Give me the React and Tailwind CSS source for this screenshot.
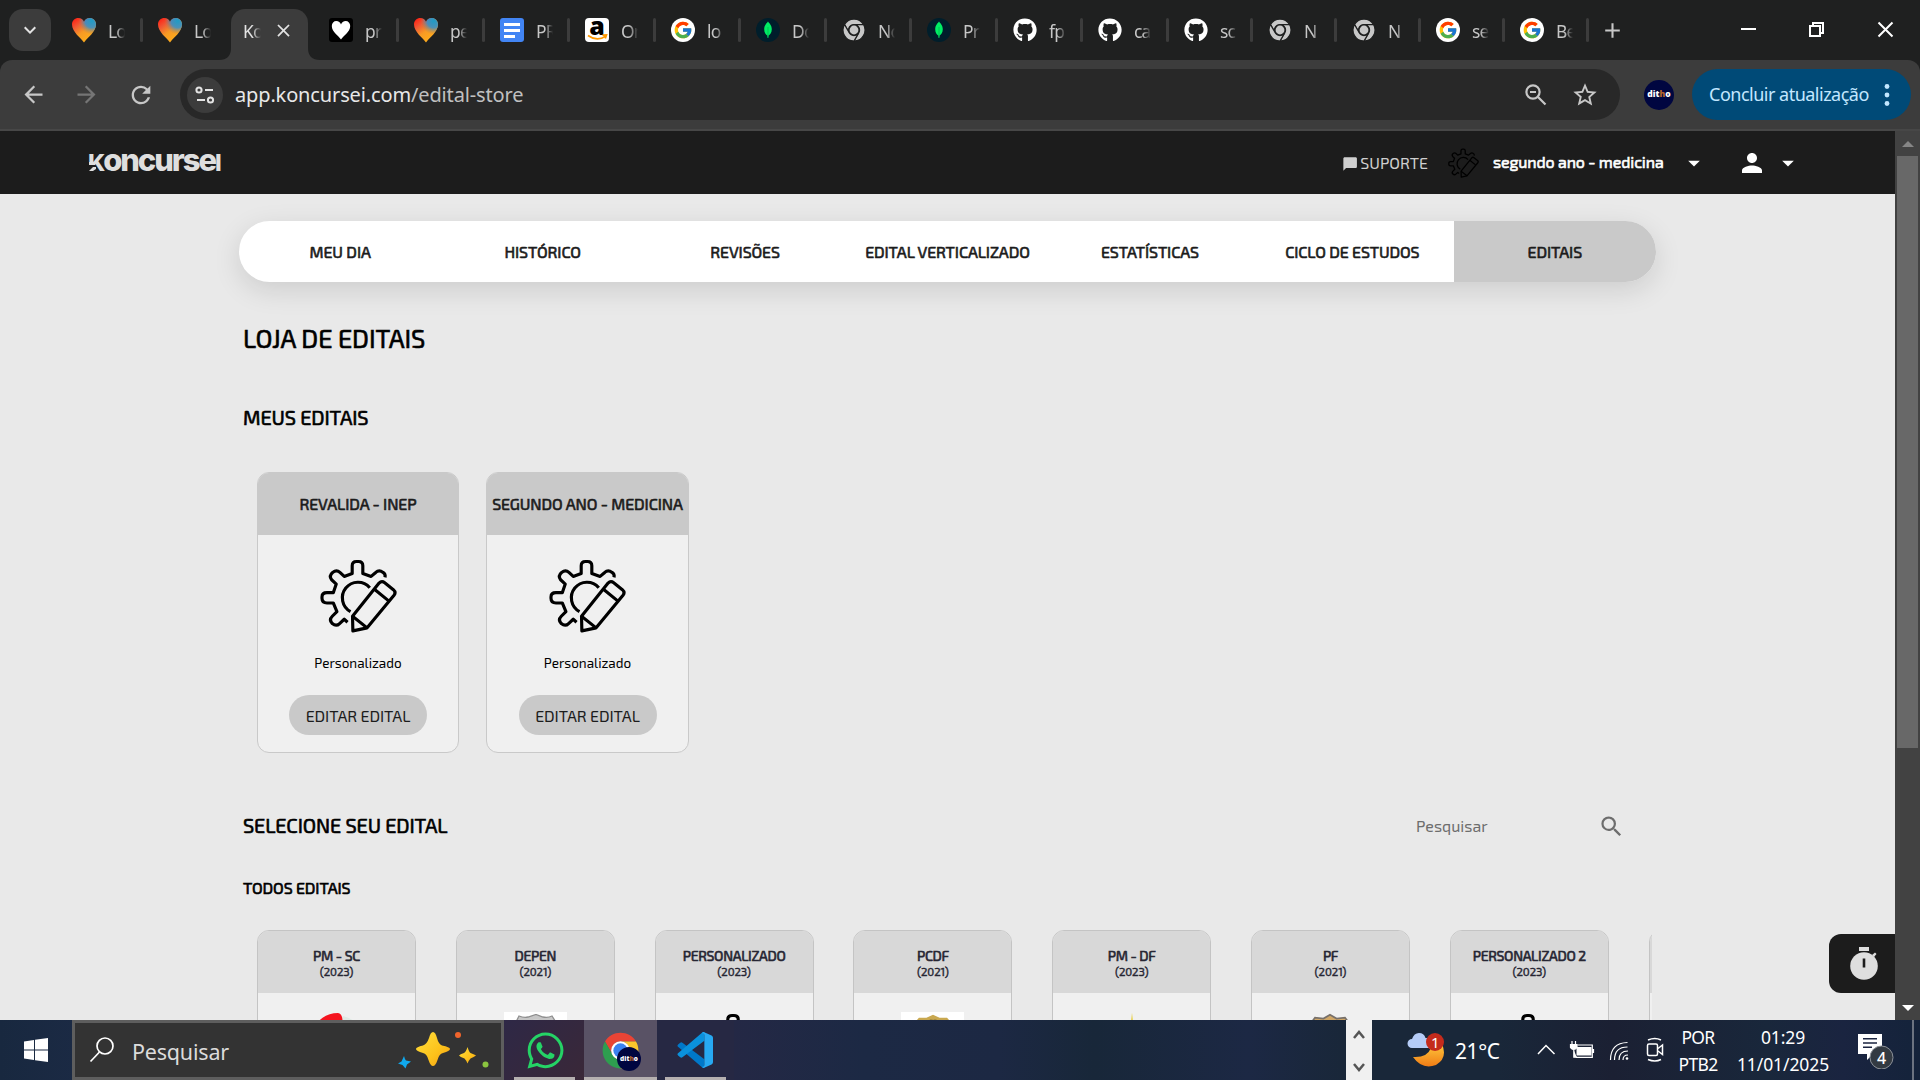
import React from "react";
import { FaGithub, FaWhatsapp } from "react-icons/fa";
import { FcGoogle } from "react-icons/fc";
import {
  MdArrowBack,
  MdArrowForward,
  MdRefresh,
  MdClose,
  MdAdd,
  MdKeyboardArrowDown,
  MdStarOutline,
  MdChatBubble,
  MdArrowDropDown,
  MdPerson,
  MdSearch,
} from "react-icons/md";

const UI = "font-['Segoe_UI','Noto_Sans',sans-serif]";
const SITE = "font-['Exo_2',Roboto,sans-serif]";
const HEAVY = "font-normal tracking-[-0.11px] [-webkit-text-stroke:0.6px_currentColor]";

function HeartIcon({ id }) {
  return (
    <svg width="24" height="26" viewBox="0 0 24 26" className="shrink-0">
      <defs>
        <linearGradient id={id} x1="0.1" y1="0" x2="0.75" y2="0.9">
          <stop offset="0" stopColor="#ff1d12" />
          <stop offset="0.3" stopColor="#f05a35" />
          <stop offset="0.6" stopColor="#f89a24" />
          <stop offset="1" stopColor="#ffae1a" />
        </linearGradient>
        <radialGradient id={id + "b"} cx="0.82" cy="0.12" r="0.55">
          <stop offset="0" stopColor="#1f9cc4" />
          <stop offset="0.5" stopColor="#2e8fd0" stopOpacity="0.85" />
          <stop offset="1" stopColor="#a87a60" stopOpacity="0" />
        </radialGradient>
      </defs>
      {[id, id + "b"].map((g) => (
        <path key={g} fill={`url(#${g})`} d="M12 25.5C9 21 0 15 0 7.5 0 3.5 3 1 6.2 1 9 1 11 2.6 12 5c1-2.400 3-4 5.800-4C21 1 24 3.500 24 7.500 24 15 15 21 12 25.500z" />
      ))}
    </svg>
  );
}

function BlackHeart() {
  return (
    <span className="flex size-6 shrink-0 items-center justify-center rounded-[3px] bg-black">
      <svg width="20" height="20" viewBox="0 0 20 20">
        <path fill="#fff" d="M10 19.500C8 16 .8 12 .8 6 .8 3 2.800 1 5.300 1 7.600 1 9.300 2.300 10 4.500 10.700 2.300 12.400 1 14.700 1c2.500 0 4.500 2 4.500 5 0 6-7.200 10-9.200 13.500z" />
      </svg>
    </span>
  );
}

function DocsIcon() {
  return (
    <span className="flex size-6 shrink-0 flex-col justify-center gap-[3px] rounded-[3px] bg-[#4285f4] px-1">
      <i className="h-[3px] bg-white" />
      <i className="h-[3px] bg-white" />
      <i className="h-[3px] w-[11px] bg-white" />
    </span>
  );
}

function AmazonIcon() {
  return (
    <span className="relative flex size-6 shrink-0 justify-center rounded bg-white">
      <span className="-mt-[7px] font-['Open_Sans',sans-serif] text-[25px] leading-[28px] font-extrabold text-black">a</span>
      <svg className="absolute inset-x-0 bottom-0" width="24" height="8" viewBox="0 0 24 8">
        <path d="M3 1.500q9 6.500 17.500.8M17.500 1.200l4-.2-1.200 3.500" fill="none" stroke="#ff9900" strokeWidth="1.700" />
      </svg>
    </span>
  );
}

function GoogleIcon() {
  return (
    <span className="flex size-6 shrink-0 items-center justify-center rounded-full bg-white">
      <FcGoogle size={20} />
    </span>
  );
}

function MongoIcon() {
  return (
    <span className="flex size-6 shrink-0 items-center justify-center rounded-full bg-[#001e2b]">
      <svg width="10" height="18" viewBox="0 0 10 18">
        <path fill="#00ed64" d="M5 .5c.7 1.400 3.800 3.200 3.800 7.700 0 3.600-2 5.400-3.200 6.400L5.300 17h-.7l-.3-2.400C3 13.600 1.200 11.800 1.200 8.200 1.200 3.700 4.300 1.900 5 .5z" />
        <path stroke="#00a84a" strokeWidth=".6" d="M5 6v10" />
      </svg>
    </span>
  );
}

function ChromeIcon({ size, colors, ring, gap }) {
  return (
    <svg width={size} height={size} viewBox="0 0 48 48" className="shrink-0">
      <g stroke={gap} strokeWidth={gap ? 2.500 : 0}>
        <path fill={colors[0]} d="M43.050 13A22 22 0 0 0 4.950 13L14.470 29.500A11 11 0 0 1 24 13Z" />
        <path fill={colors[1]} d="M24 46A22 22 0 0 0 43.050 13H24A11 11 0 0 1 33.530 29.500Z" />
        <path fill={colors[2]} d="M4.950 13A22 22 0 0 0 24 46L33.530 29.500A11 11 0 0 1 14.470 29.500Z" />
      </g>
      <circle cx="24" cy="24" r="11.500" fill={ring} />
      <circle cx="24" cy="24" r="8.800" fill={colors[3]} />
    </svg>
  );
}

const GrayChrome = () => (
  <ChromeIcon size={24} colors={["#c7c7c7", "#c7c7c7", "#c7c7c7", "#c7c7c7"]} ring="#1f2020" gap="#1f2020" />
);
const Github = () => <FaGithub size={24} className="shrink-0 text-white" />;

function EditGear({ className }) {
  return (
    <svg viewBox="238 298 232 222" className={className} fill="none" stroke="currentColor" strokeWidth="9.500" strokeLinejoin="round">
      <path d="M434 353q2-10-6-15-12-9-22 0L392 350 367 341V318q0-13-13-13h-6q-13 0-13 13V341L311 350 298 338q-10-9-22 0-12 10-3 22L287 373 278 399H259q-15 0-15 13v4q0 14 15 14H278L289 456 275 470q-11 11 0 22 12 10 22 0L311 479 321 488" />
      <path d="M388 384A47 47 0 1 0 330 456" />
      <path d="M336 470 416 370q8-8 17-1L459 390q9 8 2 17L380 505 337 514Z" />
      <path d="M401 388 444 423M336 470 380 505" />
    </svg>
  );
}

function VsCode() {
  return (
    <svg width="36" height="36" viewBox="0 0 100 100">
      <path fill="#0078c9" d="M3 35 9 30q3-2.500 6 0L76 76v24L71 99 2 40q-2-2.500 1-5z" />
      <path fill="#0a91dc" d="M3 65 9 70q3 2.500 6 0L76 24V0L71 1 2 60q-2 2.500 1 5z" />
      <path fill="#27a9f2" d="M74 0 96 10q4 2 4 6v68q0 4-4 6L74 100q-4 0-4-4 6 2 6-4V8q0-6-6-4 0-4 4-4z" />
    </svg>
  );
}

const tabs = [
  { w: "w-[86px]", icon: <HeartIcon id="h1" />, t: "Lo" },
  { w: "w-[86px]", icon: <HeartIcon id="h2" />, t: "Lo", noSep: true },
  { active: true },
  { w: "w-[85px]", icon: <BlackHeart />, t: "pr" },
  { w: "w-[86px]", icon: <HeartIcon id="h3" />, t: "pe" },
  { w: "w-[85px]", icon: <DocsIcon />, t: "PR" },
  { w: "w-[86px]", icon: <AmazonIcon />, t: "On" },
  { w: "w-[85px]", icon: <GoogleIcon />, t: "lo" },
  { w: "w-[86px]", icon: <MongoIcon />, t: "Do" },
  { w: "w-[85px]", icon: <GrayChrome />, t: "No" },
  { w: "w-[86px]", icon: <MongoIcon />, t: "Pr" },
  { w: "w-[85px]", icon: <Github />, t: "fp" },
  { w: "w-[86px]", icon: <Github />, t: "ca" },
  { w: "w-[84px]", icon: <Github />, t: "sc" },
  { w: "w-[84px]", icon: <GrayChrome />, t: "N" },
  { w: "w-[84px]", icon: <GrayChrome />, t: "N" },
  { w: "w-[84px]", icon: <GoogleIcon />, t: "se" },
  { w: "w-[84px]", icon: <GoogleIcon />, t: "Be" },
];

const fade = "whitespace-nowrap [mask-image:linear-gradient(to_right,black_50%,transparent)]";

function Tab({ tab }) {
  if (tab.active) {
    return (
      <div className="relative flex h-[51px] w-[85px] shrink-0 self-end px-1">
        <svg className="absolute bottom-0 -left-[8px]" width="12" height="12" viewBox="0 0 12 12">
          <path fill="#3c3c3c" d="M12 0v12H0Q12 12 12 0z" />
        </svg>
        <svg className="absolute -right-[8px] bottom-0" width="12" height="12" viewBox="0 0 12 12">
          <path fill="#3c3c3c" d="M0 0v12h12Q0 12 0 0z" />
        </svg>
        <div className="flex w-full items-center rounded-t-[14px] bg-[#3c3c3c] pl-3 pb-[9px]">
          <span className={"mt-[3px] w-[18px] text-[17.500px] tracking-[-0.8px] text-[#e3e3e3] " + fade}>Ko</span>
          <MdClose size={21} className="ml-[12px] shrink-0 text-[#e3e3e3]" />
        </div>
      </div>
    );
  }
  return (
    <div className={"flex h-[60px] shrink-0 items-center pl-[17px] " + tab.w}>
      {tab.icon}
      <span className={"mt-[3px] ml-3 w-[17px] text-[17.500px] tracking-[-0.8px] text-[#c7c7c7] " + fade}>{tab.t}</span>
      {!tab.noSep && <i className="-mr-[2px] ml-auto h-6 w-[3px] rounded bg-[#3c3c3c]" />}
    </div>
  );
}

function TabStrip() {
  return (
    <div className="flex h-[60px] shrink-0 items-center bg-[#1f2020]">
      <div className="mr-1 ml-[9px] flex size-[42px] shrink-0 items-center justify-center rounded-[14px] bg-[#3c3c3c] text-[#e3e3e3]">
        <MdKeyboardArrowDown size={24} />
      </div>
      {tabs.map((tab, i) => (
        <Tab key={i} tab={tab} />
      ))}
      <MdAdd size={25} className="ml-[13px] text-[#c7c7c7]" />
      <svg className="ml-auto" width="180" height="60" viewBox="1740 0 180 60" fill="none" stroke="#fff" strokeWidth="2">
        <path d="M1741 29h15" />
        <path d="M1810 26h10v10h-10zM1813 26v-3h10v10h-3" />
        <path d="M1878.500 22.500l14 14M1892.500 22.500l-14 14" />
      </svg>
    </div>
  );
}

function Ditho({ className }) {
  return (
    <span className={"flex items-center justify-center rounded-full bg-[#000640] font-['Open_Sans',sans-serif] font-extrabold text-white " + className}>
      dit<span className="text-[#b5652a]">h</span>o
    </span>
  );
}

function Toolbar() {
  return (
    <div className="bg-[#1f2020]">
      <div className="flex h-[71px] items-center rounded-t-[12px] border-b-2 border-[#474747] bg-[#3c3c3c] text-[#c7c7c7]">
        <MdArrowBack size={27} className="ml-5" />
        <MdArrowForward size={27} className="ml-[26px] text-[#757575]" />
        <MdRefresh size={28} className="ml-[27px]" />
        <div className="ml-[25px] flex h-[51px] w-[1440px] items-center rounded-full bg-[#282828]">
          <span className="ml-[7px] flex size-9 items-center justify-center rounded-full bg-[#3c3c3c]">
            <svg width="20" height="20" viewBox="0 0 20 20" fill="none" stroke="#e3e3e3" strokeWidth="2">
              <circle cx="4" cy="5" r="2.600" />
              <path d="M10 5h8M2 15h8" />
              <circle cx="15.500" cy="15" r="2.600" />
            </svg>
          </span>
          <span className="ml-3 text-[20px] tracking-[-0.14px] text-[#e8e8e8]">
            app.koncursei.com<span className="text-[#c0c0c0]">/edital-store</span>
          </span>
          <svg className="mr-[23px] ml-auto" width="24" height="24" viewBox="0 0 24 24" fill="none" stroke="#c7c7c7" strokeWidth="2.200">
            <circle cx="9" cy="9" r="6.600" />
            <path d="M14 14l7.500 7.500M6 9h6" />
          </svg>
          <MdStarOutline size={28} className="mr-[21px]" />
        </div>
        <Ditho className="ml-6 size-[30px] text-[8.500px]" />
        <div className="ml-[18px] flex h-[51px] w-[219px] items-center rounded-full bg-[#004a77] pl-[17px] text-[#c2e7ff]">
          <span className="w-[160px] text-[18px] tracking-[-0.5px] whitespace-nowrap">Concluir atualização</span>
          <svg className="ml-[15px]" width="6" height="24" viewBox="0 0 6 24" fill="#c2e7ff">
            <circle cx="3" cy="3.500" r="2.400" />
            <circle cx="3" cy="12" r="2.400" />
            <circle cx="3" cy="20.500" r="2.400" />
          </svg>
        </div>
      </div>
    </div>
  );
}

function SiteHeader() {
  return (
    <header className="flex h-[63px] shrink-0 items-center bg-[#1c1c1c] pl-[88px] text-white">
      <span className="relative -mt-[6px] w-[135px] font-[Inter,sans-serif] text-[31px] leading-none font-extrabold tracking-[-2.1px] whitespace-nowrap text-[#dedede]">
        <span className="text-[23.400px]">K</span>oncurse<span className="text-[23.400px]">I</span>
        <svg className="absolute bottom-[4px] left-0" width="9" height="9" viewBox="0 0 9 9">
          <path fill="#1c1c1c" d="M0 0h7v9H0z" />
          <path fill="#dedede" d="M1 0h6v3H1zM1 9l4-4h3v2L5 9z" />
        </svg>
      </span>
      <div className="ml-[1119px] flex w-[86px] items-center text-[#cfcfcf]">
        <MdChatBubble size={18} className="mt-[2px]" />
        <span className="ml-[2px] text-[16px]">SUPORTE</span>
      </div>
      <EditGear className="ml-[20px] h-[30px] w-[31px] text-black" />
      <span className={"ml-[14px] w-[175px] -translate-y-px text-[16px] whitespace-nowrap " + HEAVY}>segundo ano - medicina</span>
      <MdArrowDropDown size={28} className="ml-[12px]" />
      <MdPerson size={30} className="ml-[29px]" />
      <MdArrowDropDown size={28} className="ml-[7px]" />
    </header>
  );
}

const nav = ["MEU DIA", "HISTÓRICO", "REVISÕES", "EDITAL VERTICALIZADO", "ESTATÍSTICAS", "CICLO DE ESTUDOS", "EDITAIS"];

const store = [
  { name: "PM - SC", year: "(2023)", art: "sc" },
  { name: "DEPEN", year: "(2021)", art: "depen" },
  { name: "PERSONALIZADO", year: "(2023)", art: "gear" },
  { name: "PCDF", year: "(2021)", art: "pcdf" },
  { name: "PM - DF", year: "(2023)", art: "df" },
  { name: "PF", year: "(2021)", art: "pf" },
  { name: "PERSONALIZADO 2", year: "(2023)", art: "gear" },
  { name: "", year: "", art: "" },
];

function Emblem({ art }) {
  if (art === "gear") return <EditGear className="mt-[20px] h-[73px] w-[76px] text-black" />;
  if (art === "sc")
    return (
      <svg className="mt-[19px]" width="64" height="60" viewBox="0 0 64 60">
        <path fill="#dfe9e4" d="M38 4q8 2 12 6H36z" />
        <path fill="#f5141f" d="M11 12Q20 1 33 1q6 1 4 14H8z" />
      </svg>
    );
  if (art === "df")
    return (
      <svg className="mt-[20px]" width="20" height="60" viewBox="0 0 20 60">
        <path fill="#e5c71c" d="M10 0 13 30H7z" />
      </svg>
    );
  if (art === "depen")
    return (
      <span className="mt-[19px] flex h-[70px] w-[63px] justify-center bg-white pt-[2px]">
        <svg width="63" height="60" viewBox="0 0 63 60">
          <path fill="#c6c6c6" stroke="#8f8f8f" strokeWidth="1.300" d="M11 10 15 2q5 2 9 1l8-2.500 7 2.500q5 1 9-1l5 8v40H11z" />
          <path fill="none" stroke="#eee" strokeWidth="1.300" d="M16 9q16-5 32 0" />
        </svg>
      </span>
    );
  if (art === "pcdf")
    return (
      <span className="mt-[19px] flex h-[70px] w-[63px] justify-center bg-white">
        <svg width="60" height="60" viewBox="0 0 64 60">
          <path fill="#c9a850" d="M12 10 17 4h8l7-3 7 3h8l5 6v40H12z" />
          <path fill="none" stroke="#4e4623" strokeWidth="2.500" strokeDasharray="3 1" d="M13 11q19-7 38 0" />
        </svg>
      </span>
    );
  if (art === "pf")
    return (
      <svg className="mt-[19px]" width="60" height="60" viewBox="0 0 64 60">
        <path fill="#cfa565" stroke="#77706a" strokeWidth="1.800" d="M10 12 16 4l9 1 7-4 7 4 9-1 6 8v40H10z" />
      </svg>
    );
  return null;
}

function MyCard({ title, width }) {
  return (
    <article className={"flex h-[281px] flex-col items-center overflow-hidden rounded-[12px] border border-[#c9c9c9] bg-[#f0f0f0] " + width}>
      <h4 className={"flex h-[62px] w-full shrink-0 items-center justify-center bg-[#c9c9c9] text-[16px] whitespace-nowrap text-[#1c1c1c] " + HEAVY}>{title}</h4>
      <EditGear className="mt-[24px] h-[74px] w-[77px] text-black" />
      <p className="mt-[18px] text-[13.500px] leading-[24px] text-black">Personalizado</p>
      <button className="mt-[20px] h-10 w-[138px] rounded-full bg-[#c9c9c9] pt-[1px] text-[16px] tracking-[-0.1px] text-[#1c1c1c]">EDITAR EDITAL</button>
    </article>
  );
}

function Main() {
  return (
    <main className="relative h-[826px] overflow-hidden bg-[#e9e9e9] pt-[27px] pl-[239px] text-black">
      <nav className="grid h-[61px] w-[1417px] grid-cols-7 overflow-hidden rounded-full bg-white shadow-[0_8px_28px_rgba(0,0,0,0.12)]">
        {nav.map((n, i) => (
          <a key={n} className={"flex items-center justify-center text-[16px] whitespace-nowrap text-[#1c1c1c] " + HEAVY + (i === 6 ? " bg-[#c9c9c9]" : "")}>{n}</a>
        ))}
      </nav>
      <h1 className={"mt-[41px] pl-1 text-[25.500px] leading-[30px] " + HEAVY}>LOJA DE EDITAIS</h1>
      <h2 className={"mt-[52px] pl-1 text-[20px] leading-[24px] " + HEAVY}>MEUS EDITAIS</h2>
      <div className="mt-[43px] flex gap-[27px] pl-[18px]">
        <MyCard title="REVALIDA - INEP" width="w-[202px]" />
        <MyCard title="SEGUNDO ANO - MEDICINA" width="w-[203px]" />
      </div>
      <div className="mt-[48px] flex h-[50px] w-[1398px] items-center justify-between pl-1">
        <h2 className={"-mt-[2px] text-[20px] leading-[24px] " + HEAVY}>SELECIONE SEU EDITAL</h2>
        <div className="flex h-[50px] w-[240px] items-center justify-between rounded-[5px] pr-[12px] pl-[19px] text-[#6d6d6d]">
          <span className="text-[16px]">Pesquisar</span>
          <MdSearch size={27} />
        </div>
      </div>
      <h3 className={"mt-[25px] pl-1 text-[16px] leading-[24px] " + HEAVY}>TODOS EDITAIS</h3>
      <div className="mt-[30px] flex w-[1413px] gap-[39.800px] overflow-hidden pl-[18px]">
        {store.map((s, i) => (
          <article key={i} className="flex h-[200px] w-[159px] shrink-0 flex-col items-center overflow-hidden rounded-[12px] border border-[#c4c4c4] bg-[#f0f0f0]">
            <div className={"flex h-[62px] w-full shrink-0 flex-col items-center bg-[#d8d8d8] pt-[16px] text-[#262633] " + HEAVY}>
              <span className="text-[14px] leading-[18px] tracking-[-0.3px] whitespace-nowrap">{s.name}</span>
              <span className="text-[11.500px] leading-[14px] [-webkit-text-stroke:0.4px_currentColor]">{s.year}</span>
            </div>
            <Emblem art={s.art} />
          </article>
        ))}
      </div>
      <div className="absolute top-[740px] right-0 flex h-[59px] w-[66px] items-center justify-center rounded-l-[12px] bg-[#1c1c1c]">
        <svg className="ml-[3px]" width="28" height="34" viewBox="0 0 28 34" fill="#dedede">
          <path d="M9 0h10v4H9zM22 8l3-2.500 1.500 1.500L24 10z" />
          <circle cx="14" cy="19" r="13.800" />
          <path fill="#1c1c1c" d="M12.700 11.500h2.600v9h-2.600z" />
        </svg>
      </div>
    </main>
  );
}

function ScrollBar() {
  return (
    <div className="flex h-[889px] w-[25px] shrink-0 flex-col items-center bg-[#424242]">
      <svg className="mt-[10px]" width="12" height="6" viewBox="0 0 12 6"><path fill="#868686" d="M6 0l6 6H0z" /></svg>
      <div className="mt-[9px] h-[592px] w-[21px] bg-[#686868]" />
      <svg className="mt-auto mb-[9px]" width="12" height="6" viewBox="0 0 12 6"><path fill="#fff" d="M6 6l6-6H0z" /></svg>
    </div>
  );
}

function Sparkles() {
  return (
    <svg width="94" height="40" viewBox="396 1030 94 40">
      <defs>
        <linearGradient id="gold" x1="0" y1="0" x2="1" y2="1">
          <stop offset="0" stopColor="#ffdf3d" />
          <stop offset=".6" stopColor="#fcc21b" />
          <stop offset="1" stopColor="#f39a16" />
        </linearGradient>
      </defs>
      <path fill="url(#gold)" d="M432 1032Q434.500 1032 436 1038 437.500 1044 441 1045.500 449 1047 449 1049 449 1051 442 1053 438 1054 436.500 1060 434.500 1066 432 1066 429.500 1066 427.500 1060 426 1054 422 1053 415 1051 415 1049 415 1047 422 1045.500 426 1044 428 1038 429.500 1032 432 1032z" />
      <path fill="url(#gold)" d="M466.500 1047Q468 1052 469.500 1053 475 1055 475 1055.500 473 1057 469.500 1058.500 468 1060 466.500 1063.500 465 1060 463.500 1058.500 459 1057 458 1055.500 459 1054 463 1053 465 1052 466.500 1047z" />
      <path fill="#10a9ee" d="M403 1056q1 4 2 4.500l5 1-4 3-1.500 4-3-3.500-4.500-1.500 3.500-2z" />
      <circle cx="457" cy="1035" r="3" fill="#f0642c" />
      <circle cx="484.500" cy="1064.500" r="3" fill="#8bc53f" />
    </svg>
  );
}

function Taskbar() {
  return (
    <footer className={"flex h-[60px] w-full bg-[linear-gradient(90deg,#18283f_0%,#1b2a44_4%,#35283c_30%,#242845_38%,#1c2944_45%,#1c2843_52%,#182739_57%,#1c2844_65%,#192739_70%,#192739_78%,#1b2033_84%,#19273b_92%,#1a2440_96%,#14233a_100%)] text-white " + UI}>
      <div className="flex w-[72px] shrink-0 items-center justify-center">
        <svg width="24" height="24" viewBox="0 0 24 24" fill="#fff">
          <path d="M0 3.500 10 2v9.500H0zM11 1.800 24 0v11.500H11zM0 12.500h10V22L0 20.500zM11 12.500h13V24l-13-1.800z" />
        </svg>
      </div>
      <div className="flex w-[432px] shrink-0 items-center border-[3px] border-[#5e5e5e] bg-[#333]">
        <svg className="ml-[14px]" width="26" height="26" viewBox="0 0 26 26" fill="none" stroke="#fff" strokeWidth="1.700">
          <circle cx="16" cy="9" r="8" />
          <path d="M10.500 15 1.500 24.500" />
        </svg>
        <span className="mt-[4px] ml-[17px] w-[98px] text-[21.500px] tracking-[-0.2px] text-[#dcdcdc]">Pesquisar</span>
        <span className="ml-auto pr-[10px]"><Sparkles /></span>
      </div>
      <div className="flex w-20 flex-col items-center bg-[linear-gradient(135deg,#2e2846,#3a2838)]">
        <FaWhatsapp size={41} className="mt-[9.500px] ml-[2px] text-[#25d366]" />
        <i className="mt-auto h-[3px] w-[61px] bg-[#b5b0b0]" />
      </div>
      <div className="relative flex w-[73px] flex-col items-center bg-[#595265]">
        <span className="mt-[10.500px]"><ChromeIcon size={39} colors={["#e94435", "#fcc62c", "#2e9e4f", "#3b82f0"]} ring="#fff" /></span>
        <Ditho className="absolute top-[27px] left-[33px] size-[24px] text-[6.500px]" />
        <i className="mt-auto h-[3px] w-full bg-[#b5b0b0]" />
      </div>
      <div className="flex w-[77px] flex-col items-center bg-[#262843]">
        <span className="mt-3 mr-[1px]"><VsCode /></span>
        <i className="mt-auto h-[3px] w-[61px] bg-[#b5b0b0]" />
      </div>
      <div className="ml-auto flex w-[26px] flex-col items-center justify-between bg-[#f0f0f0] pt-[10px] pb-[8px]">
        <svg width="12" height="9" viewBox="0 0 12 9"><path d="M1 8l5-6 5 6" fill="none" stroke="#555" strokeWidth="2.500" /></svg>
        <svg width="12" height="9" viewBox="0 0 12 9"><path d="M1 1l5 6 5-6" fill="none" stroke="#555" strokeWidth="2.500" /></svg>
      </div>
      <div className="flex w-[548px] items-center">
        <svg className="ml-[35px] shrink-0" width="38" height="36" viewBox="0 0 38 36">
          <defs>
            <linearGradient id="moon" x1="0" y1="0" x2="0" y2="1">
              <stop offset="0" stopColor="#ffc93c" />
              <stop offset="1" stopColor="#f07c16" />
            </linearGradient>
          </defs>
          <path fill="url(#moon)" d="M6 25q14 1 18-9l11-4q6 14-6 21-14 5-23-8z" />
          <path fill="#b5ccf7" d="M5 16a4.500 4.500 0 0 1 0-9Q7 1 12 1q5 0 6.500 5h4q4 5 0 10z" />
          <circle cx="28" cy="10" r="9" fill="#c42b1c" />
        </svg>
        <span className="-ml-[14px] w-[9px] -translate-y-[8px] text-[15px] leading-none">1</span>
        <span className="mt-[3px] ml-[15px] w-[48px] text-[21px] tracking-[-0.4px]">21°C</span>
        <svg className="ml-[34px] shrink-0" width="128" height="28" viewBox="1537 1036 128 28" fill="none" stroke="#fff" strokeWidth="1.500">
          <path d="M1538 1054l8-8.500 8.500 8.500" />
          <path fill="#fff" stroke="none" d="M1576.500 1047h15v8.500h-15z" />
          <path strokeWidth="1.200" d="M1577.500 1045h14.800v12.300h-16.500M1593.500 1049v4" />
          <path fill="#fff" strokeWidth="1.200" d="M1570.500 1044.500h6.500v3q-3 4-6.500 0zM1572 1044v-3M1575.500 1044v-3M1573.800 1050v7.200h3" />
          <path d="M1610.500 1060q0-17 17-17.500M1614.500 1060q0-13 13-13M1619 1060q0-9 9-9M1623 1060q0-5 5-5" strokeWidth="1.200" />
          <circle cx="1627" cy="1058.500" r="1.300" fill="#fff" stroke="none" />
          <rect x="1647.500" y="1044" width="10" height="11.500" rx="1.500" />
          <path d="M1658 1048.500l4.500-3.500v9.500l-4.500-3.500M1648 1040q7-3 13 0M1648 1059.500q7 3 13 0" />
        </svg>
        <div className="mt-[2px] ml-[10px] flex w-[46px] flex-col items-center text-[17.500px] leading-[27px] tracking-[-0.7px]">
          <span>POR</span>
          <span>PTB2</span>
        </div>
        <div className="mt-[1px] ml-[13px] flex w-[98px] flex-col items-center text-[17.500px] leading-[27px] tracking-[-0.1px]">
          <span>01:29</span>
          <span>11/01/2025</span>
        </div>
        <svg className="ml-[24px] shrink-0" width="38" height="38" viewBox="1856 1036 38 38">
          <path fill="#fff" d="M1858 1038h24v20h-9l-6 6v-6h-9z" transform="translate(0 1)" />
          <path stroke="#1b2440" strokeWidth="1.500" d="M1863 1043.700h14M1863 1048h14M1863 1052.300h9" />
          <circle cx="1881.500" cy="1061.500" r="11.500" fill="#333a42" stroke="#8c9198" transform="translate(0 1)" />
        </svg>
        <span className="-ml-[17px] w-[10px] translate-y-[8px] text-[16px] leading-none font-medium">4</span>
        <i className="mr-[6px] ml-auto h-full w-[2px] bg-[#6b7380]" />
      </div>
    </footer>
  );
}

export default function App() {
  return (
    <div className={"flex h-[1080px] w-[1920px] flex-col overflow-hidden bg-[#1f2020] " + UI}>
      <TabStrip />
      <Toolbar />
      <div className="flex h-[889px] shrink-0">
        <div className={"w-[1895px] " + SITE}>
          <SiteHeader />
          <Main />
        </div>
        <ScrollBar />
      </div>
      <Taskbar />
    </div>
  );
}
